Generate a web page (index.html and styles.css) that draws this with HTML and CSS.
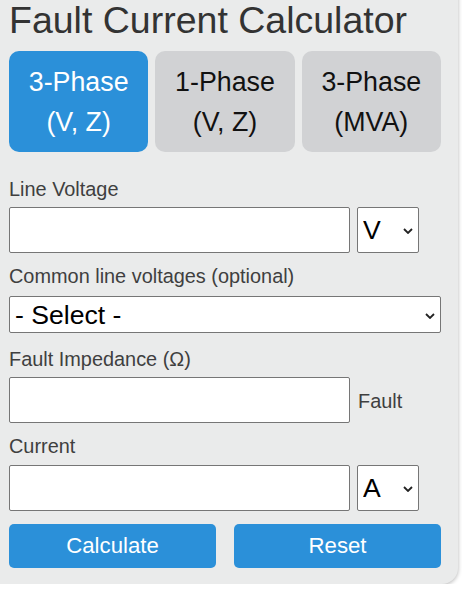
FILE: index.html
```html
<!DOCTYPE html>
<html lang="en">
<head>
<meta charset="utf-8">
<title>Fault Current Calculator</title>
<link rel="stylesheet" href="styles.css">
</head>
<body>
<div class="card">
  <h1 class="title">Fault Current Calculator</h1>
  <div class="tabs">
    <button class="tab active"><span>3-Phase</span><span>(V, Z)</span></button>
    <button class="tab"><span>1-Phase</span><span>(V, Z)</span></button>
    <button class="tab"><span>3-Phase</span><span>(MVA)</span></button>
  </div>

  <div class="field first">
    <label class="label">Line Voltage</label>
    <div class="row">
      <input class="input" type="text">
      <span class="sel-wrap unit">
        <select class="select"><option>V</option></select>
        <svg class="chev" width="10" height="6" viewBox="0 0 10 6"><path d="M1 1 L5 5 L9 1" fill="none" stroke="#222" stroke-width="1.8"/></svg>
      </span>
    </div>
  </div>

  <div class="field">
    <label class="label lbl-common">Common line voltages (optional)</label>
    <span class="sel-wrap wide">
      <select class="select"><option>- Select -</option></select>
      <svg class="chev" width="10" height="6" viewBox="0 0 10 6"><path d="M1 1 L5 5 L9 1" fill="none" stroke="#222" stroke-width="1.8"/></svg>
    </span>
  </div>

  <div class="field after-select">
    <label class="label">Fault Impedance (Ω)</label>
    <div class="row">
      <input class="input" type="text">
      <span class="suffix">Fault</span>
    </div>
  </div>

  <div class="field">
    <label class="label">Current</label>
    <div class="row">
      <input class="input" type="text">
      <span class="sel-wrap unit">
        <select class="select"><option>A</option></select>
        <svg class="chev" width="10" height="6" viewBox="0 0 10 6"><path d="M1 1 L5 5 L9 1" fill="none" stroke="#222" stroke-width="1.8"/></svg>
      </span>
    </div>
  </div>

  <div class="actions">
    <button class="btn">Calculate</button>
    <button class="btn">Reset</button>
  </div>
</div>
</body>
</html>
```

FILE: styles.css
```css
html, body {
  margin: 0;
  padding: 0;
  background: #ffffff;
}
body {
  font-family: "Liberation Sans", Arial, sans-serif;
  overflow: hidden;
}
.card {
  margin: -20px 4px 0 -20px;
  padding: 20px 17px 16px 29px;
  background: #eaebeb;
  border-radius: 16px;
  box-shadow: 0 1px 4px rgba(0, 0, 0, 0.3);
}
.title {
  margin: 0;
  font-size: 37.5px;
  font-weight: normal;
  line-height: 40px;
  color: #333333;
  white-space: nowrap;
}
.tabs {
  display: grid;
  grid-template-columns: repeat(3, 1fr);
  gap: 7px;
  margin-top: 11px;
}
.tab {
  display: flex;
  flex-direction: column;
  align-items: center;
  border: none;
  border-radius: 10px;
  background: #d1d2d4;
  color: #111111;
  font-family: "Liberation Sans", Arial, sans-serif;
  font-size: 26.8px;
  line-height: 40px;
  padding: 11px 0 10px;
  margin: 0;
}
.tab.active {
  background: #2b90d9;
  color: #ffffff;
}
.field {
  margin-top: 11.5px;
}
.field.first {
  margin-top: 25.5px;
}
.field.after-select {
  margin-top: 14.5px;
}
.label {
  display: block;
  font-size: 19.9px;
  line-height: 22.8px;
  color: #3f3f3f;
  margin-bottom: 7px;
}
.lbl-common {
  margin-bottom: 8.5px;
}
.row {
  display: flex;
  align-items: center;
  gap: 7px;
}
.input {
  box-sizing: border-box;
  width: 341px;
  height: 46px;
  margin: 0;
  padding: 0 6px;
  border: 1px solid #767676;
  border-radius: 2px;
  background: #ffffff;
  font-size: 22px;
  font-family: "Liberation Sans", Arial, sans-serif;
}
.sel-wrap {
  position: relative;
  display: block;
}
.sel-wrap.unit {
  width: 62px;
  height: 46px;
}
.sel-wrap.wide {
  width: 100%;
  height: 37px;
}
.select {
  appearance: none;
  -webkit-appearance: none;
  box-sizing: border-box;
  width: 100%;
  height: 100%;
  margin: 0;
  padding: 0 0 0 5px;
  border: 1px solid #767676;
  border-radius: 2px;
  background: #ffffff;
  color: #000000;
  font-family: "Liberation Sans", Arial, sans-serif;
  font-size: 26.6px;
}
.chev {
  position: absolute;
  right: 6px;
  top: 50%;
  margin-top: -2px;
  pointer-events: none;
}
.suffix {
  font-size: 19.9px;
  line-height: 22.8px;
  color: #3f3f3f;
  margin-left: 1px;
  margin-top: 3px;
}
.actions {
  display: grid;
  grid-template-columns: 1fr 1fr;
  gap: 18px;
  margin-top: 13.3px;
}
.btn {
  height: 44px;
  margin: 0;
  border: none;
  border-radius: 5px;
  background: #2b90d9;
  color: #ffffff;
  font-family: "Liberation Sans", Arial, sans-serif;
  font-size: 22.2px;
}
```
